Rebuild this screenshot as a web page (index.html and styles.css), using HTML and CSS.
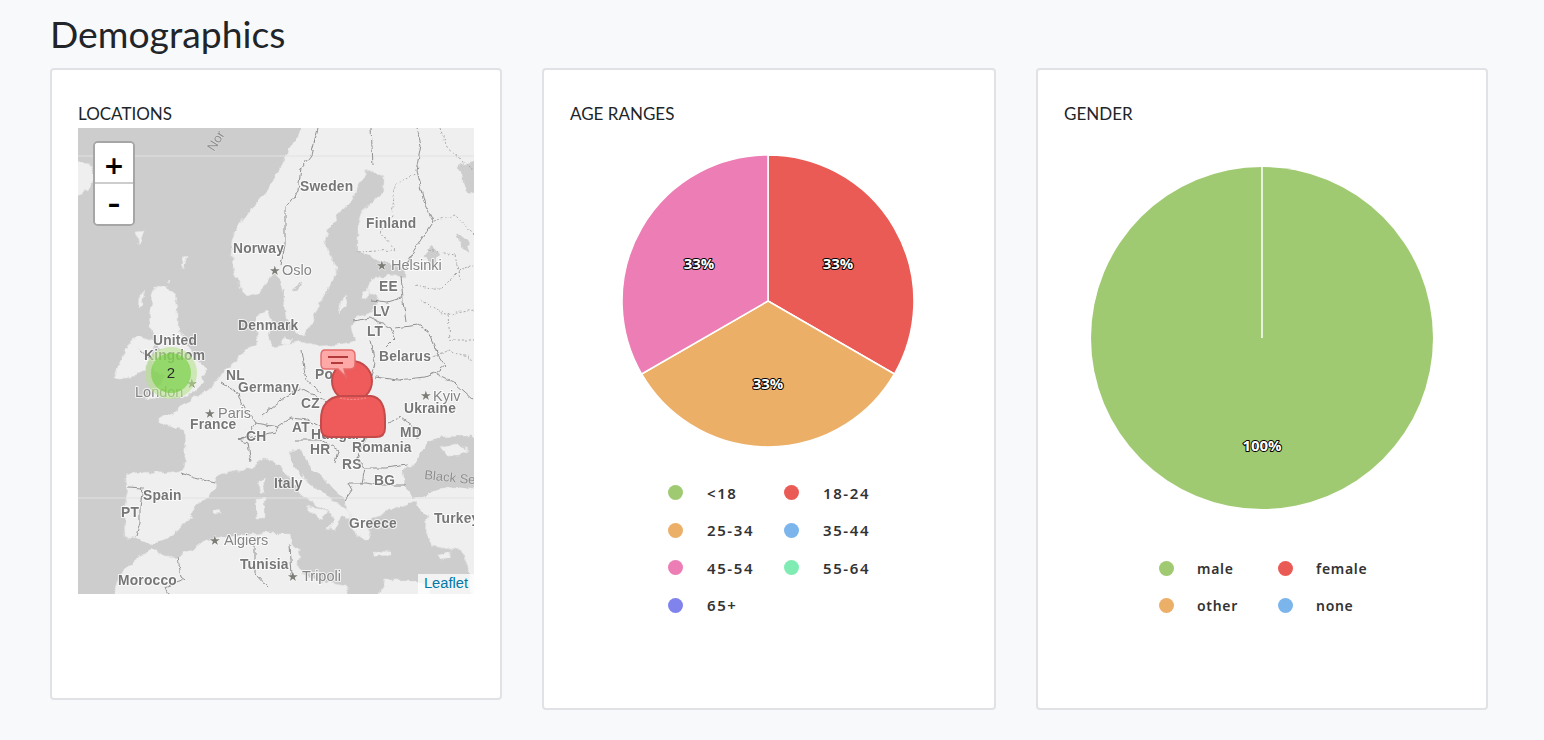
FILE: index.html
```html
<!DOCTYPE html>
<html lang="en">
<head>
<meta charset="utf-8">
<title>Demographics</title>
<link rel="stylesheet" href="styles.css">
</head>
<body>
<main class="page">
  <h1 class="page-title">Demographics</h1>
  <div class="cards">
    <section class="card card-map">
      <h2 class="card-title">LOCATIONS</h2>
      <div class="map">
        <svg class="map-svg" viewBox="78 128 396 466" width="396" height="466">
          <defs>
            <filter id="coast" x="-5%" y="-5%" width="110%" height="110%" color-interpolation-filters="sRGB">
              <feTurbulence type="fractalNoise" baseFrequency="0.11" numOctaves="3" seed="7" result="noise"/>
              <feDisplacementMap in="SourceGraphic" in2="noise" scale="7" xChannelSelector="R" yChannelSelector="G"/>
            </filter>
            <filter id="wiggle" x="-5%" y="-5%" width="110%" height="110%" color-interpolation-filters="sRGB">
              <feTurbulence type="fractalNoise" baseFrequency="0.14" numOctaves="2" seed="3" result="noise"/>
              <feDisplacementMap in="SourceGraphic" in2="noise" scale="5" xChannelSelector="R" yChannelSelector="G"/>
            </filter>
          </defs>
          <rect class="sea" x="78" y="128" width="396" height="466"/>
          <g class="coast-layer">
            <g class="land">
              <path d="M305,120 L296,140 L290,150 L278,172 L268,190 L258,200 L250,212 L240,224 L232,240 L231,255 L234,272 L240,288 L248,296 L258,293 L268,282 L275,272 L280,280 L284,300 L287,318 L296,333 L305,336 L312,322 L321,301 L330,285 L338,268 L330,258 L325,245 L328,231 L338,215 L352,200 L358,185 L366,172 L375,171 L384,176 L384,190 L372,203 L362,210 L358,225 L358,250 L365,254 L385,262 L405,270 L405,276 L388,274 L371,279 L367,290 L378,300 L372,312 L355,318 L351,328 L355,341 L335,345 L320,346 L300,341 L285,345 L272,347 L268,335 L271,320 L268,310 L258,313 L256,330 L258,345 L245,350 L238,360 L225,370 L211,388 L195,398 L178,407 L172,415 L158,416 L158,423 L172,427 L185,430 L186,450 L183,470 L165,473 L140,472 L125,475 L128,490 L124,510 L125,537 L140,538 L150,545 L171,537 L182,525 L192,517 L195,507 L215,490 L216,478 L222,474 L240,470 L252,468 L262,460 L275,462 L285,472 L298,490 L315,505 L328,510 L335,520 L327,528 L335,530 L342,517 L352,518 L345,508 L325,495 L305,480 L292,463 L289,452 L298,448 L310,465 L330,485 L345,500 L348,515 L356,535 L365,540 L372,534 L366,520 L378,516 L388,510 L405,505 L415,500 L418,505 L428,515 L425,530 L432,545 L450,548 L462,550 L470,575 L470,600 L480,600 L480,120 Z"/>
              <path d="M110,600 L121,573 L135,560 L151,550 L165,556 L178,557 L195,548 L205,540 L235,536 L262,533 L290,533 L292,545 L300,550 L297,562 L305,578 L325,582 L345,586 L352,600 Z"/>
              <path d="M378,600 L385,580 L410,580 L430,586 L432,600 Z"/>
              <path d="M155,287 L168,288 L175,297 L178,310 L178,330 L188,345 L195,358 L205,368 L203,382 L190,395 L170,397 L145,399 L160,385 L165,375 L155,372 L153,360 L160,350 L155,335 L148,325 L150,310 L152,295 Z"/>
              <path d="M125,350 L137,336 L155,342 L150,355 L146,370 L128,378 L114,378 L120,362 Z"/>
              <path d="M70,160 L88,163 L95,177 L88,190 L70,199 Z"/>
              <path d="M136,232 L144,231 L141,239 L138,244 Z"/>
              <path d="M184,256 L187,255 L185,266 L182,268 Z"/>
              <path d="M168,281 L170,280 L169,285 Z"/>
              <path d="M139,299 L145,290 L142,305 L138,308 Z"/>
              <path d="M306,507 L326,510 L321,520 Z"/>
              <path d="M256,498 L265,498 L265,518 L257,518 Z"/>
              <path d="M259,481 L265,479 L264,493 L259,492 Z"/>
              <path d="M211,511 L220,509 L222,514 L214,515 Z"/>
              <path d="M372,551 L390,552 L392,555 L376,556 Z"/>
              <path d="M438,555 L452,551 L450,558 L441,560 Z"/>
              <path d="M340,302 L347,296 L345,306 L338,313 Z"/>
              <path d="M362,292 L370,290 L368,298 L360,297 Z"/>
              <path d="M284,336 L292,340 L287,346 L280,343 Z"/>
            </g>
            <g class="sea-shape">
              <path d="M412,497 L405,484 L403,470 L415,463 L428,441 L445,437 L480,436 L480,490 L450,486 L430,492 L418,497 Z"/>
              <path d="M425,255 L432,245 L440,255 L434,265 L428,262 Z"/>
              <path d="M458,165 L480,160 L480,195 L466,190 Z"/>
              <path d="M456,232 L466,240 L470,252 L462,246 Z"/>
              <path d="M297,285 L302,282 L296,292 L291,290 Z"/>
              <path d="M280,295 L284,290 L283,298 Z"/>
            </g>
            <path class="land-fill" d="M441,448 L455,444 L468,449 L458,456 L448,456 Z"/>
          </g>
          <g class="graticule">
            <path d="M78,156 H474"/>
            <path d="M78,498 H474"/>
          </g>
          <g class="border-layer">
            <g class="borders">
              <path d="M318,128 L311,155 L301,168 L298,191 L285,208 L285,245 L281,265"/>
              <path d="M371,128 L373,165"/>
              <path d="M416,128 L421,145 L416,171 L425,205 L433,221 L411,255 L405,268"/>
              <path d="M371,300 L388,302 L401,298"/>
              <path d="M401,275 L403,301 L406,322"/>
              <path d="M353,321 L371,318 L391,328 L395,338 L385,348"/>
              <path d="M395,328 L418,325 L428,331 L438,355 L445,365 L435,373"/>
              <path d="M301,350 L306,380 L321,393"/>
              <path d="M370,340 L375,363 L371,377"/>
              <path d="M375,377 L398,380 L425,377 L435,373"/>
              <path d="M435,373 L455,383 L474,400"/>
              <path d="M388,423 L401,417 L418,430 L418,440"/>
              <path d="M385,422 L365,440 L356,460 L365,468 L385,468 L408,465"/>
              <path d="M348,483 L365,483 L378,485 L405,485"/>
              <path d="M365,468 L362,483"/>
              <path d="M295,440 L321,440 L338,450 L335,463"/>
              <path d="M278,427 L291,418 L308,420 L321,427 L340,424"/>
              <path d="M285,397 L301,388 L318,397 L331,403 L345,396"/>
              <path d="M340,424 L345,396 L371,377"/>
              <path d="M241,403 L238,393 L221,383"/>
              <path d="M241,403 L255,423 L248,437 L238,440 L248,443 L251,463"/>
              <path d="M238,440 L258,436 L275,432 L278,427"/>
              <path d="M262,415 L285,397"/>
              <path d="M255,423 L278,427"/>
              <path d="M181,473 L195,478 L215,483"/>
              <path d="M128,487 L143,488 L140,507 L140,523 L136,537"/>
              <path d="M178,557 L181,577 L185,580 L165,587 L168,594"/>
              <path d="M255,537 L255,573 L268,587"/>
              <path d="M290,545 L292,575"/>
              <path d="M345,500 L352,490 L348,483"/>
              <path d="M150,360 L138,349"/>
            </g>
            <g class="borders-minor">
              <path d="M440,128 L447,148 L474,170"/>
              <path d="M418,172 L395,185 L392,215 L380,232 L395,250 L358,252"/>
              <path d="M434,221 L455,215 L474,235"/>
              <path d="M415,285 L440,290 L460,270 L474,265"/>
              <path d="M420,300 L445,315 L474,310"/>
              <path d="M448,315 L450,340 L474,340"/>
              <path d="M430,358 L450,350 L474,360"/>
              <path d="M428,250 L455,255 L460,280"/>
            </g>
          </g>
          <g class="labels">
            <text class="country" x="300" y="191">Sweden</text>
            <text class="country" x="366" y="228">Finland</text>
            <text class="country" x="233" y="253">Norway</text>
            <text class="country" x="238" y="330">Denmark</text>
            <text class="country" x="379" y="291">EE</text>
            <text class="country" x="373" y="316">LV</text>
            <text class="country" x="367" y="336">LT</text>
            <text class="country" x="379" y="361">Belarus</text>
            <text class="country" x="153" y="345">United</text>
            <text class="country" x="144" y="360">Kingdom</text>
            <text class="country" x="226" y="380">NL</text>
            <text class="country" x="238" y="392">Germany</text>
            <text class="country" x="315" y="379">Po</text>
            <text class="country" x="190" y="429">France</text>
            <text class="country" x="246" y="441">CH</text>
            <text class="country" x="301" y="408">CZ</text>
            <text class="country" x="292" y="432">AT</text>
            <text class="country" x="311" y="439">Hungary</text>
            <text class="country" x="310" y="454">HR</text>
            <text class="country" x="352" y="452">Romania</text>
            <text class="country" x="342" y="469">RS</text>
            <text class="country" x="400" y="437">MD</text>
            <text class="country" x="404" y="413">Ukraine</text>
            <text class="country" x="274" y="488">Italy</text>
            <text class="country" x="374" y="485">BG</text>
            <text class="country" x="349" y="528">Greece</text>
            <text class="country" x="434" y="523">Turkey</text>
            <text class="country" x="143" y="500">Spain</text>
            <text class="country" x="121" y="517">PT</text>
            <text class="country" x="240" y="569">Tunisia</text>
            <text class="country" x="118" y="585">Morocco</text>
            <text class="city" x="282" y="275">Oslo</text>
            <text class="city" x="391" y="270">Helsinki</text>
            <text class="city" x="135" y="397">London</text>
            <text class="city" x="218" y="418">Paris</text>
            <text class="city" x="433" y="401">Kyiv</text>
            <text class="city" x="224" y="545">Algiers</text>
            <text class="city" x="302" y="581">Tripoli</text>
            <text class="star" x="269" y="275">★</text>
            <text class="star" x="376" y="270">★</text>
            <text class="star" x="186" y="388">★</text>
            <text class="star" x="204" y="418">★</text>
            <text class="star" x="420" y="400">★</text>
            <text class="star" x="209" y="545">★</text>
            <text class="star" x="287" y="581">★</text>
            <text class="sea-label" transform="translate(424,479) rotate(6)">Black Sea</text>
            <text class="sea-label" transform="translate(214,152) rotate(-58)">Nor</text>
          </g>
          <g class="cluster">
            <circle class="cluster-outer" cx="171" cy="373" r="26"/>
            <circle class="cluster-inner" cx="171" cy="373" r="20"/>
            <text class="cluster-count" x="171" y="378">2</text>
          </g>
          <g class="user-marker">
            <circle cx="352" cy="381" r="20"/>
            <path d="M341,396 H371 Q385,398 385,420 V428 Q385,437 376,437 H330 Q321,437 321,428 V420 Q321,398 341,396 Z"/>
            <path class="user-seam" d="M340,398 Q352,401 366,398"/>
          </g>
          <g class="chat-marker">
            <path d="M325,350 H350 Q355,350 355,355 V364 Q355,369 350,369 H344 L346,377 L338,369 H325 Q321,369 321,364 V355 Q321,350 325,350 Z"/>
            <path class="chat-line" d="M328,357 H348"/>
            <path class="chat-line" d="M331,363 H343"/>
          </g>
        </svg>
        <div class="zoom-control">
          <button class="zoom-btn zoom-in" type="button">+</button>
          <button class="zoom-btn zoom-out" type="button">–</button>
        </div>
        <div class="attribution"><a href="#">Leaflet</a></div>
      </div>
    </section>

    <section class="card card-chart">
      <h2 class="card-title">AGE RANGES</h2>
      <svg class="pie pie-age" viewBox="0 0 396 346" width="396" height="346">
        <path class="slice s-red" d="M198,173 L198,27 A146,146 0 0 1 324.4,246 Z"/>
        <path class="slice s-orange" d="M198,173 L324.4,246 A146,146 0 0 1 71.6,246 Z"/>
        <path class="slice s-pink" d="M198,173 L71.6,246 A146,146 0 0 1 198,27 Z"/>
        <text class="pie-label" x="268" y="141">33%</text>
        <text class="pie-label" x="198" y="261">33%</text>
        <text class="pie-label" x="129" y="141">33%</text>
      </svg>
      <ul class="legend legend-age">
        <li class="legend-item"><span class="dot s-green"></span>&lt;18</li>
        <li class="legend-item"><span class="dot s-red"></span>18-24</li>
        <li class="legend-item"><span class="dot s-orange"></span>25-34</li>
        <li class="legend-item"><span class="dot s-blue"></span>35-44</li>
        <li class="legend-item"><span class="dot s-pink"></span>45-54</li>
        <li class="legend-item"><span class="dot s-mint"></span>55-64</li>
        <li class="legend-item"><span class="dot s-violet"></span>65+</li>
      </ul>
    </section>

    <section class="card card-chart">
      <h2 class="card-title">GENDER</h2>
      <svg class="pie pie-gender" viewBox="0 0 396 422" width="396" height="422">
        <circle class="s-green" cx="198" cy="210" r="171"/>
        <path class="pie-seam" d="M198,39 V210"/>
        <text class="pie-label" x="198" y="323">100%</text>
      </svg>
      <ul class="legend legend-gender">
        <li class="legend-item"><span class="dot s-green"></span>male</li>
        <li class="legend-item"><span class="dot s-red"></span>female</li>
        <li class="legend-item"><span class="dot s-orange"></span>other</li>
        <li class="legend-item"><span class="dot s-blue"></span>none</li>
      </ul>
    </section>
  </div>
</main>
</body>
</html>
```

FILE: styles.css
```css
* { box-sizing: border-box; }

html, body { margin: 0; height: 100%; }

body {
  background: #f8f9fb;
  color: #212529;
  font-family: Lato, "Open Sans", sans-serif;
  overflow: hidden;
}

.page { padding: 12px 0 0 50px; }

.page-title {
  margin: 0 0 13px;
  font-size: 37.3px;
  font-weight: 400;
  line-height: 43px;
}

.cards {
  display: flex;
  align-items: flex-start;
  gap: 40px;
}

.card {
  flex: none;
  background: #fff;
  border: 2px solid #e0e2e5;
  border-radius: 4px;
  padding: 34px 26px 0;
}

.card-map { width: 452px; height: 632px; }
.card-chart { width: 454px; height: 642px; }
.card-chart:last-child { width: 452px; }

.card-title {
  margin: 0 0 5px;
  font-size: 17px;
  font-weight: 400;
  line-height: 19px;
  color: #212529;
}

/* Map */
.map {
  position: relative;
  width: 396px;
  height: 466px;
  overflow: hidden;
}

.map-svg { display: block; filter: blur(0.5px); }
.sea { fill: #cdcdcd; }
.coast-layer { filter: url(#coast); }
.border-layer { filter: url(#wiggle); }
.land path, .land-fill { fill: #efefef; stroke: #e2e2e2; stroke-width: 0.6; }
.sea-shape path { fill: #cdcdcd; stroke: #c4c4c4; stroke-width: 0.4; }
.graticule path { fill: none; stroke: #e2e2e2; stroke-width: 1; }
.borders path { fill: none; stroke: #868686; stroke-width: 0.9; }
.borders-minor path { fill: none; stroke: #a0a0a0; stroke-width: 0.9; stroke-dasharray: 2 2; }

.labels text {
  font-family: "Liberation Sans", Arial, sans-serif;
  paint-order: stroke;
  stroke: rgba(255, 255, 255, 0.75);
  stroke-width: 2px;
  stroke-linejoin: round;
}
.labels .country { font-size: 13.8px; font-weight: 700; fill: #767676; letter-spacing: 0.2px; }
.labels .city { font-size: 14.5px; font-weight: 400; fill: #858585; }
.labels .star { font-family: "DejaVu Sans", sans-serif; font-size: 13px; fill: #7d7d78; stroke-width: 1px; }
.labels .sea-label { font-size: 13px; fill: #8d8d8d; stroke: rgba(255, 255, 255, 0.3); stroke-width: 1px; }

.cluster-outer { fill: rgba(181, 226, 140, 0.6); }
.cluster-inner { fill: rgba(110, 204, 57, 0.6); }
.cluster-count {
  font-family: "Liberation Sans", Arial, sans-serif;
  font-size: 15px;
  text-anchor: middle;
  fill: #2b2b2b;
}

.user-marker circle, .user-marker path {
  fill: #ef5a5a;
  stroke: #c44b4b;
  stroke-width: 2;
}
.user-marker .user-seam { fill: none; stroke: #f39a9a; stroke-width: 1; stroke-dasharray: 2 1.5; }
.chat-marker > path:first-child { fill: #ffa8a8; stroke: #e46a6a; stroke-width: 1.4; }
.chat-marker .chat-line { fill: none; stroke: #b23a3a; stroke-width: 2; }

.zoom-control {
  position: absolute;
  left: 15px;
  top: 13px;
  width: 42px;
  border: 2px solid #a6a6a6;
  border-radius: 5px;
  display: flex;
  flex-direction: column;
  overflow: hidden;
  background: #fff;
}

.zoom-btn {
  display: block;
  width: 100%;
  height: 40.5px;
  padding: 0;
  border: 0;
  background: #fff;
  color: #000;
  font-family: "DejaVu Sans", sans-serif;
  font-size: 25px;
  font-weight: 700;
  line-height: 40px;
  text-align: center;
}

.zoom-in { border-bottom: 2px solid #ccc; padding-top: 3px; }

.attribution {
  position: absolute;
  right: 0;
  bottom: 0;
  height: 20px;
  padding: 0 6px;
  background: rgba(255, 255, 255, 0.75);
  font-family: "Liberation Sans", Arial, sans-serif;
  font-size: 14.7px;
  line-height: 19px;
}
.attribution a { color: #0078a8; text-decoration: none; }

/* Charts */
.pie { display: block; }
.slice { stroke: #fff; stroke-width: 1.5; stroke-linejoin: round; }
.pie-seam { stroke: #fff; stroke-width: 1.5; fill: none; }
.pie-label {
  font-family: "Open Sans", sans-serif;
  font-size: 15px;
  font-weight: 700;
  text-anchor: middle;
  fill: #fff;
  stroke: #000;
  stroke-width: 2px;
  stroke-linejoin: round;
  paint-order: stroke;
}

svg .s-green, .dot.s-green { fill: #a0ca72; background: #a0ca72; }
svg .s-red, .dot.s-red { fill: #ea5b55; background: #ea5b55; }
svg .s-orange, .dot.s-orange { fill: #ecaf68; background: #ecaf68; }
svg .s-pink, .dot.s-pink { fill: #ec7db5; background: #ec7db5; }
.dot.s-blue { background: #7cb5ec; }
.dot.s-mint { background: #80ecb4; }
.dot.s-violet { background: #8083ec; }

.legend {
  list-style: none;
  margin: 0;
  padding: 0;
  display: grid;
  justify-content: start;
}
.legend-age {
  grid-template-columns: 116px 92px;
  grid-auto-rows: 37.5px;
  padding-left: 98px;
  font-size: 15px;
  letter-spacing: 1.6px;
}
.legend-gender {
  grid-template-columns: 119px 89px;
  grid-auto-rows: 37px;
  padding-left: 95px;
  font-size: 14px;
  letter-spacing: 0.7px;
}

.legend-item {
  display: flex;
  align-items: center;
  gap: 24px;
  font-family: "Noto Sans", sans-serif;
  font-weight: 600;
  color: #333;
  white-space: nowrap;
}
.legend-gender .legend-item { gap: 23px; }

.dot {
  flex: none;
  width: 15px;
  height: 15px;
  border-radius: 50%;
}
```
